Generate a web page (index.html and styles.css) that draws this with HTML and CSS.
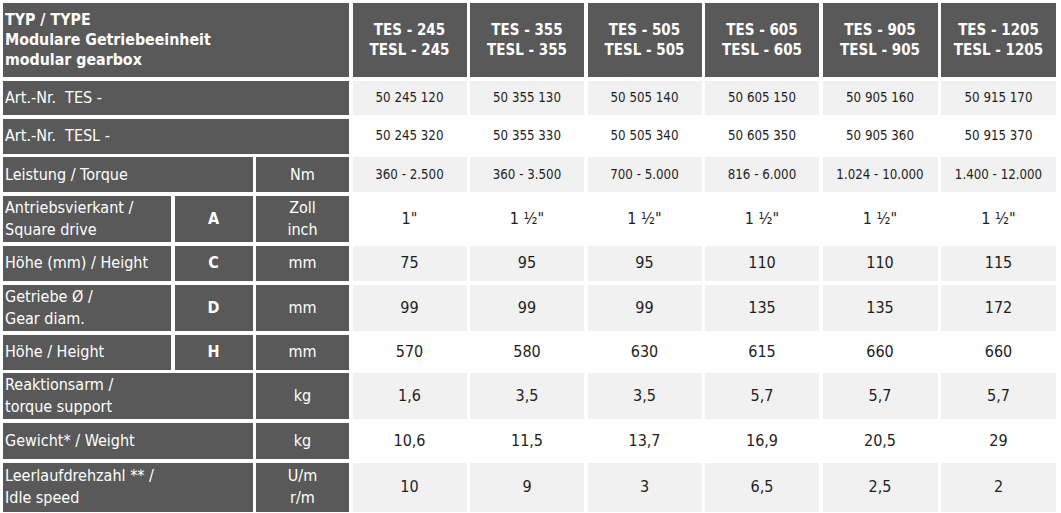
FILE: index.html
```html
<!DOCTYPE html>
<html lang="de">
<head>
<meta charset="utf-8">
<title>TES / TESL</title>
<link rel="stylesheet" href="styles.css">
</head>
<body>
<div class="spec">
  <div class="c dark title span3">TYP / TYPE<br>Modulare Getriebeeinheit<br>modular gearbox</div>
  <div class="c dark head">TES - 245<br>TESL - 245</div>
  <div class="c dark head">TES - 355<br>TESL - 355</div>
  <div class="c dark head">TES - 505<br>TESL - 505</div>
  <div class="c dark head">TES - 605<br>TESL - 605</div>
  <div class="c dark head">TES - 905<br>TESL - 905</div>
  <div class="c dark head">TES - 1205<br>TESL - 1205</div>

  <div class="c dark label span3">Art.-Nr.&nbsp; TES -</div>
  <div class="c light val sm">50 245 120</div>
  <div class="c light val sm">50 355 130</div>
  <div class="c light val sm">50 505 140</div>
  <div class="c light val sm">50 605 150</div>
  <div class="c light val sm">50 905 160</div>
  <div class="c light val sm">50 915 170</div>

  <div class="c dark label span3">Art.-Nr.&nbsp; TESL -</div>
  <div class="c val sm">50 245 320</div>
  <div class="c val sm">50 355 330</div>
  <div class="c val sm">50 505 340</div>
  <div class="c val sm">50 605 350</div>
  <div class="c val sm">50 905 360</div>
  <div class="c val sm">50 915 370</div>

  <div class="c dark label span2">Leistung / Torque</div>
  <div class="c dark unit">Nm</div>
  <div class="c light val sm">360 - 2.500</div>
  <div class="c light val sm">360 - 3.500</div>
  <div class="c light val sm">700 - 5.000</div>
  <div class="c light val sm">816 - 6.000</div>
  <div class="c light val sm">1.024 - 10.000</div>
  <div class="c light val sm">1.400 - 12.000</div>

  <div class="c dark label">Antriebsvierkant /<br>Square drive</div>
  <div class="c dark letter">A</div>
  <div class="c dark unit">Zoll<br>inch</div>
  <div class="c val">1"</div>
  <div class="c val">1 ½"</div>
  <div class="c val">1 ½"</div>
  <div class="c val">1 ½"</div>
  <div class="c val">1 ½"</div>
  <div class="c val">1 ½"</div>

  <div class="c dark label">Höhe (mm) / Height</div>
  <div class="c dark letter">C</div>
  <div class="c dark unit">mm</div>
  <div class="c light val">75</div>
  <div class="c light val">95</div>
  <div class="c light val">95</div>
  <div class="c light val">110</div>
  <div class="c light val">110</div>
  <div class="c light val">115</div>

  <div class="c dark label">Getriebe Ø /<br>Gear diam.</div>
  <div class="c dark letter">D</div>
  <div class="c dark unit">mm</div>
  <div class="c light val">99</div>
  <div class="c light val">99</div>
  <div class="c light val">99</div>
  <div class="c light val">135</div>
  <div class="c light val">135</div>
  <div class="c light val">172</div>

  <div class="c dark label">Höhe / Height</div>
  <div class="c dark letter">H</div>
  <div class="c dark unit">mm</div>
  <div class="c val">570</div>
  <div class="c val">580</div>
  <div class="c val">630</div>
  <div class="c val">615</div>
  <div class="c val">660</div>
  <div class="c val">660</div>

  <div class="c dark label span2">Reaktionsarm /<br>torque support</div>
  <div class="c dark unit">kg</div>
  <div class="c light val">1,6</div>
  <div class="c light val">3,5</div>
  <div class="c light val">3,5</div>
  <div class="c light val">5,7</div>
  <div class="c light val">5,7</div>
  <div class="c light val">5,7</div>

  <div class="c dark label span2">Gewicht* / Weight</div>
  <div class="c dark unit">kg</div>
  <div class="c val">10,6</div>
  <div class="c val">11,5</div>
  <div class="c val">13,7</div>
  <div class="c val">16,9</div>
  <div class="c val">20,5</div>
  <div class="c val">29</div>

  <div class="c dark label span2">Leerlaufdrehzahl ** /<br>Idle speed</div>
  <div class="c dark unit">U/m<br>r/m</div>
  <div class="c light val">10</div>
  <div class="c light val">9</div>
  <div class="c light val">3</div>
  <div class="c light val">6,5</div>
  <div class="c light val">2,5</div>
  <div class="c light val">2</div>
</div>
</body>
</html>
```

FILE: styles.css
```css
html, body {
  margin: 0;
  padding: 0;
  background: #ffffff;
}

.spec {
  display: grid;
  grid-template-columns: 168px 78px 93px 114px 114px 114px 114px 115px 115px;
  grid-template-rows: 74px 34px 35px 35px 46px 35px 46px 35px 46px 36px 49px;
  column-gap: 3.5px;
  row-gap: 3.8px;
  padding: 3px;
  width: max-content;
  font-family: "DejaVu Sans Condensed", "DejaVu Sans", sans-serif;
  font-size: 16px;
}

.c {
  display: flex;
  align-items: center;
  line-height: 22px;
}

.span2 { grid-column: span 2; }
.span3 { grid-column: span 3; }

.dark {
  background: #595959;
  color: #ffffff;
}

.light {
  background: #f1f1f1;
}

.title {
  font-weight: bold;
  font-size: 15.8px;
  line-height: 20px;
  padding-left: 2px;
}

.head {
  font-weight: bold;
  font-size: 15px;
  line-height: 20px;
  justify-content: center;
  text-align: center;
}

.label {
  padding-left: 2px;
}

.letter {
  font-weight: bold;
  justify-content: center;
}

.unit {
  justify-content: center;
  text-align: center;
}

.val {
  justify-content: center;
  text-align: center;
  color: #1e1e1e;
  font-size: 16px;
}

.val.sm {
  font-size: 13.2px;
}
```
